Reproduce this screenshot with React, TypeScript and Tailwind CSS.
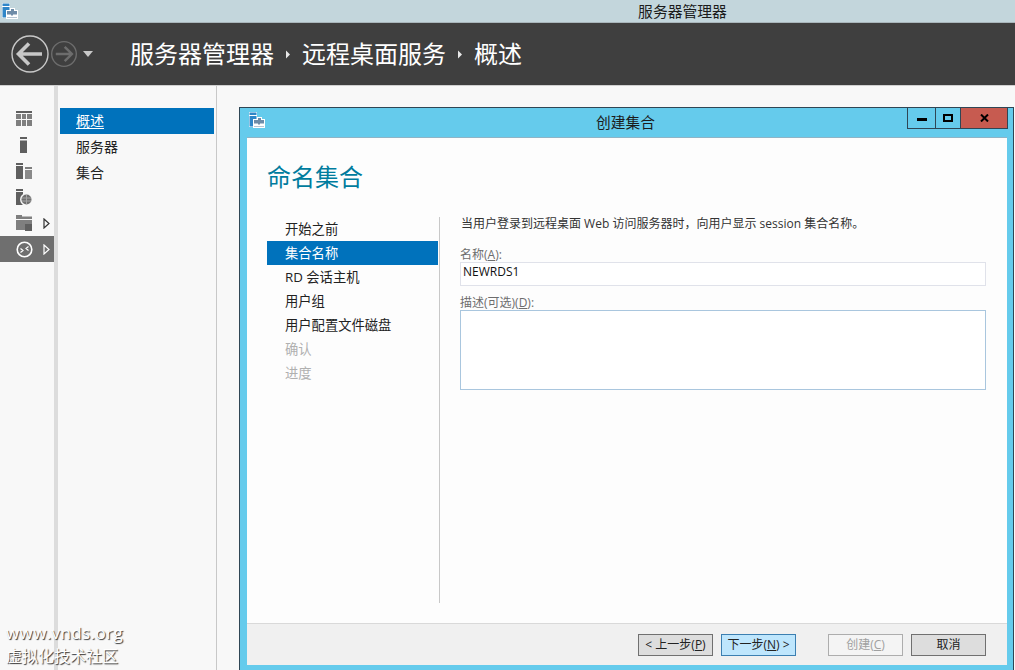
const STEPS = [
  { label: "开始之前" },
  { label: "集合名称", active: true },
  { label: "RD 会话主机" },
  { label: "用户组" },
  { label: "用户配置文件磁盘" },
  { label: "确认", disabled: true },
  { label: "进度", disabled: true },
];

const FONT = "font-['Open_Sans','Noto_Sans_CJK_SC',sans-serif]";

function AppIcon() {
  return (
    <svg width="16" height="16" viewBox="0 0 16 16">
      <rect x="0" y="0" width="8" height="15" fill="#ffffff" />
      <rect x="0.5" y="0.5" width="7" height="2.5" fill="#2f86c8" />
      <rect x="0.5" y="4" width="7" height="10.5" fill="#2f86c8" />
      <rect x="4" y="7" width="12" height="9" fill="#ffffff" />
      <rect x="8" y="5" width="5" height="3" fill="#ffffff" />
      <rect x="9" y="6" width="3" height="2" fill="#6e8ca8" />
      <rect x="5" y="8" width="10" height="3.5" fill="#6e8ca8" />
      <rect x="9" y="11" width="2" height="1.5" fill="#6e8ca8" />
      <rect x="5" y="14.5" width="10" height="0.5" fill="#6e8ca8" />
    </svg>
  );
}

function ArrowCircle({ size, color, stroke, flip }: { size: number; color: string; stroke: number; flip?: boolean }) {
  return (
    <svg width={size} height={size} viewBox="0 0 38 38" fill="none" className={flip ? "-scale-x-100" : ""}>
      <circle cx="19" cy="19" r="18" stroke={color} strokeWidth={stroke} />
      <path d="M7 19H31M18 8.5L7.5 19L18 29.5" stroke={color} strokeWidth="3.6" />
    </svg>
  );
}

function RailIcon({ index }: { index: number }) {
  if (index === 0) {
    return (
      <svg width="16" height="16" viewBox="0 0 16 16">
        <rect y="0" width="16" height="2" fill="#5f5f5f" />
        <rect y="3" width="16" height="12" fill="#7f7f7f" />
        <rect x="5" y="3" width="1" height="12" fill="#f7f7f7" />
        <rect x="10" y="3" width="1" height="12" fill="#f7f7f7" />
        <rect y="8" width="16" height="1" fill="#f7f7f7" />
      </svg>
    );
  }
  if (index === 1) {
    return (
      <svg width="16" height="16" viewBox="0 0 16 16">
        <rect x="4" y="0" width="7" height="2" fill="#5f5f5f" />
        <rect x="4" y="3.5" width="7" height="12.5" fill="#5f5f5f" />
      </svg>
    );
  }
  if (index === 2) {
    return (
      <svg width="16" height="16" viewBox="0 0 16 16">
        <rect x="0" y="0" width="7" height="2" fill="#5f5f5f" />
        <rect x="0" y="3" width="7" height="13" fill="#5f5f5f" />
        <rect x="9" y="4" width="7" height="2" fill="#7f7f7f" />
        <rect x="9" y="7" width="7" height="9" fill="#8a8a8a" />
      </svg>
    );
  }
  if (index === 3) {
    return (
      <svg width="16" height="16" viewBox="0 0 16 16">
        <rect x="0" y="0" width="7" height="2" fill="#5f5f5f" />
        <rect x="0" y="3" width="7" height="13" fill="#5f5f5f" />
        <circle cx="10.5" cy="10.5" r="6.5" fill="#f7f7f7" />
        <circle cx="10.5" cy="10.5" r="5" fill="#707070" />
        <path d="M6 9h9M6 12h9M10.5 6v9" stroke="#a5a5a5" strokeWidth="1" />
      </svg>
    );
  }
  if (index === 4) {
    return (
      <svg width="16" height="16" viewBox="0 0 16 16">
        <path d="M0 0H6V1.5H16V4H0Z" fill="#7f7f7f" />
        <rect x="0" y="5" width="9" height="10" fill="#7f7f7f" />
        <rect x="9" y="5" width="7" height="4" fill="#7f7f7f" />
        <rect x="9" y="9" width="7" height="7" fill="#5f5f5f" />
      </svg>
    );
  }
  return (
    <svg width="17" height="17" viewBox="0 0 17 17" fill="none">
      <circle cx="8.5" cy="8.5" r="7.3" stroke="#ffffff" strokeWidth="1.6" />
      <path d="M4.5 7.5L7 9.5L4.5 11.5M12.5 5.5L10 7.5L12.5 9.5" stroke="#ffffff" strokeWidth="1.2" />
    </svg>
  );
}

function Chevron({ color }: { color: string }) {
  return (
    <svg width="7" height="11" viewBox="0 0 7 11" fill="none">
      <path d="M1 1L6 5.5L1 10Z" stroke={color} strokeWidth="1.2" />
    </svg>
  );
}

function Crumb() {
  return (
    <svg width="6" height="9" viewBox="0 0 6 9" className="mx-[11px]">
      <path d="M1 0.5L5 4.5L1 8.5Z" fill="#e8e8e8" />
    </svg>
  );
}

function Button({ className, children }: { className: string; children: React.ReactNode }) {
  return (
    <div className={`flex h-[22px] w-[75px] items-center justify-center border text-[12px] ${className}`}>
      {children}
    </div>
  );
}

export default function App() {
  return (
    <div className={`relative flex h-[670px] w-[1015px] flex-col overflow-hidden bg-[#f8f8f8] ${FONT}`}>
      {/* window title */}
      <div className="relative flex h-[23px] shrink-0 items-center justify-center border-b border-[#a9b6bb] bg-[#c3d6dc] pl-[350px] text-[14.8px] text-[#1b1b1b]">
        <div className="absolute left-[2px] top-[3px]">
          <AppIcon />
        </div>
        服务器管理器
      </div>

      {/* breadcrumb bar */}
      <div className="flex h-[63px] shrink-0 items-center border-b border-[#d0d0d0] bg-[#3f3f3f] pl-[11px]">
        <ArrowCircle size={38} color="#c8c8c8" stroke={1.4} />
        <div className="ml-[2px]">
          <ArrowCircle size={26} color="#6d6d6d" stroke={2} flip />
        </div>
        <div className="ml-[6px] h-0 w-0 border-x-[5px] border-t-[6px] border-x-transparent border-t-[#c8c8c8]" />
        <div className="ml-[37px] flex items-center text-[24px] leading-none text-white">
          <span>服务器管理器</span>
          <Crumb />
          <span>远程桌面服务</span>
          <Crumb />
          <span>概述</span>
        </div>
      </div>

      <div className="flex min-h-0 flex-1">
        {/* icon rail */}
        <div className="w-[54px] shrink-0 pt-[20px]">
          {[0, 1, 2, 3, 4, 5].map((i) => (
            <div
              key={i}
              className={`relative flex h-[26px] items-center pl-[16px] ${i === 5 ? "bg-[#6f6f6f]" : ""}`}
            >
              <RailIcon index={i} />
              {i >= 4 && (
                <div className="absolute left-[43px] top-[8px]">
                  <Chevron color={i === 5 ? "#ffffff" : "#333333"} />
                </div>
              )}
            </div>
          ))}
        </div>
        <div className="w-[4px] shrink-0 bg-[#dcdcdc]" />

        {/* nav panel */}
        <div className="w-[159px] shrink-0 border-r border-[#c8c8c8] pl-[2px] pt-[22px] text-[14px] text-[#222222]">
          <div className="flex h-[26px] w-[154px] items-center bg-[#0072bc] pb-[2px] pl-[16px] text-white underline underline-offset-2">概述</div>
          <div className="flex h-[26px] items-center pb-[2px] pl-[16px]">服务器</div>
          <div className="flex h-[26px] items-center pb-[2px] pl-[16px]">集合</div>
        </div>

        {/* wizard window */}
        <div className="min-w-0 flex-1 pl-[22px] pt-[21px]">
          <div className="flex h-full w-[775px] flex-col border-l border-t border-r border-[#2f4655] bg-[#65cbec]">
            <div className="relative flex h-[29px] shrink-0 items-center justify-center pr-[2px] text-[14.7px] text-[#1b1b1b]">
              <div className="absolute left-[9px] top-[4px]">
                <AppIcon />
              </div>
              创建集合
              <div className="absolute right-[5px] top-0 flex h-[21px] border-x border-b border-[#2f4655]">
                <div className="flex w-[28px] items-center justify-center border-r border-[#2f4655]">
                  <div className="mt-[3px] h-[3px] w-[10px] bg-black" />
                </div>
                <div className="flex w-[25px] items-center justify-center border-r border-[#2f4655]">
                  <div className="h-[8px] w-[10px] border-2 border-black" />
                </div>
                <div className="flex w-[46px] items-center justify-center bg-[#c75b50]">
                  <svg width="9" height="8" viewBox="0 0 9 8">
                    <path d="M1 0.5L8 7.5M8 0.5L1 7.5" stroke="#000000" strokeWidth="2" />
                  </svg>
                </div>
              </div>
            </div>

            <div className="ml-[7px] mr-[6px] flex h-[528px] shrink-0 flex-col border-t border-[#8fb4c6] bg-white">
              <div className="flex min-h-0 flex-1 flex-col bg-[#fdfdfd] pl-[20px] pr-[20px]">
                <h1 className="mt-[24px] h-[55px] text-[24px] leading-[30px] text-[#007c9e]">命名集合</h1>
                <div className="flex">
                  <div className="mr-[1px] w-[171px] shrink-0">
                    {STEPS.map((s) => (
                      <div
                        key={s.label}
                        className={`flex h-[24px] items-center pl-[18px] pt-[1px] text-[13.3px] ${
                          s.active ? "bg-[#0072bc] text-white" : s.disabled ? "text-[#b0b0b0]" : "text-[#222222]"
                        }`}
                      >
                        {s.label}
                      </div>
                    ))}
                  </div>
                  <div className="flex h-[386px] flex-1 border-l border-[#c8c8c8] pl-[20px]">
                    <div className="w-[526px]">
                      <p className="h-[25px] pl-[1px] text-[12px] leading-[14px] text-[#333333]">
                        当用户登录到远程桌面 Web 访问服务器时，向用户显示 session 集合名称。
                      </p>
                      <div className="mt-[3px] h-[17px] pt-[1px] text-[12px] leading-[17px] text-[#6d6d6d]">
                        名称(<span className="underline">A</span>):
                      </div>
                      <div className="flex h-[24px] items-center border border-[#e0e2ea] bg-white pb-[5px] pl-[2px] text-[12px] text-[#111111]">
                        NEWRDS1
                      </div>
                      <div className="mt-[7px] h-[17px] pt-[1px] text-[12px] leading-[17px] text-[#6d6d6d]">
                        描述(可选)(<span className="underline">D</span>):
                      </div>
                      <div className="h-[80px] border border-[#a9c6de] bg-white" />
                    </div>
                  </div>
                </div>
              </div>

              <div className="flex h-[42px] shrink-0 items-start justify-end border-t border-[#d9d9d9] bg-[#f0f0f0] pr-[21px] pt-[10px]">
                <Button className="border-[#707070] bg-[#dddddd] text-[#222222]">
                  &lt; 上一步(<span className="underline">P</span>)
                </Button>
                <Button className="ml-[8px] border-[#3c7fb1] bg-[#bee6fd] text-[#222222]">
                  下一步(<span className="underline">N</span>) &gt;
                </Button>
                <Button className="ml-[32px] border-[#adadad] bg-[#f4f4f4] text-[#a0a0a0]">
                  创建(<span className="underline">C</span>)
                </Button>
                <Button className="ml-[8px] border-[#707070] bg-[#dddddd] text-[#222222]">取消</Button>
              </div>
            </div>
          </div>
        </div>
      </div>

      {/* watermark */}
      <div className="absolute left-[6px] top-[622px] text-white [text-shadow:1px_1px_1px_#333333]">
        <div className="text-[17px] leading-[21px] tracking-[0.4px]">www.vnds.org</div>
        <div className="mt-[2px] text-[16px] leading-[22px]">虚拟化技术社区</div>
      </div>
    </div>
  );
}
